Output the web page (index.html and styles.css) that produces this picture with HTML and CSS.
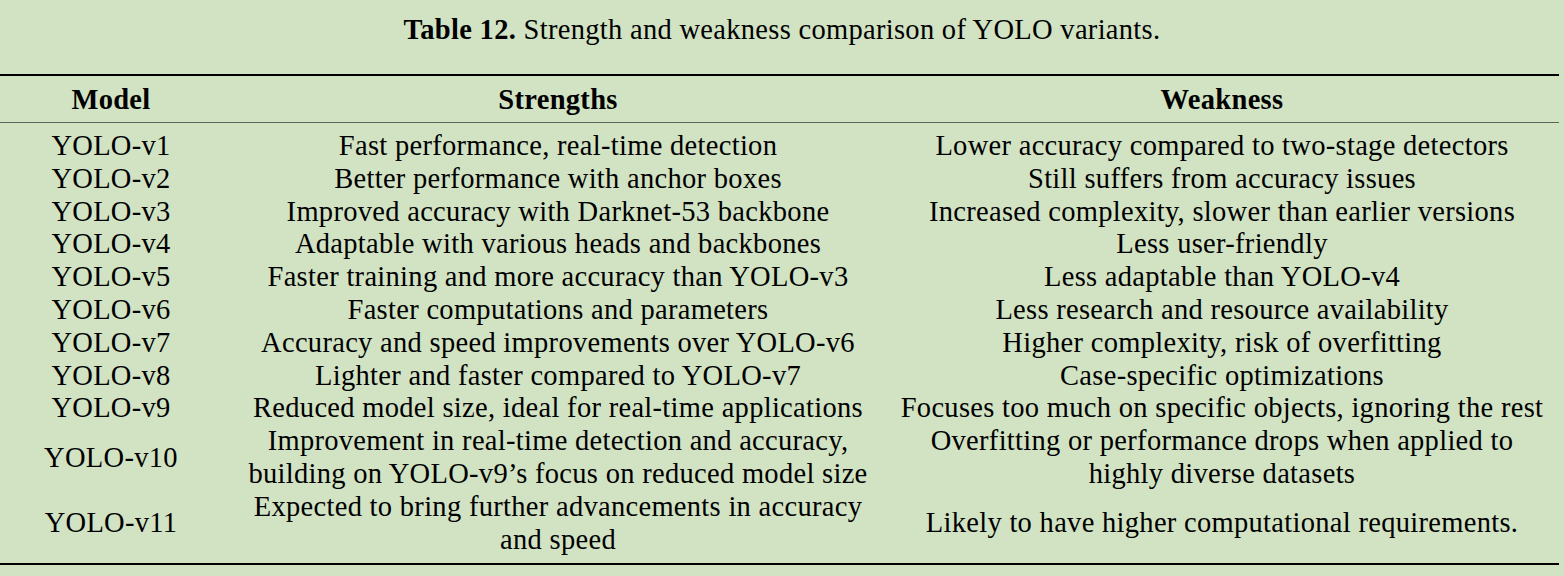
FILE: index.html
```html
<!DOCTYPE html>
<html lang="en">
<head>
<meta charset="utf-8">
<title>Table 12</title>
<link rel="stylesheet" href="styles.css">
</head>
<body>
<div class="page">
  <p class="caption"><b>Table 12.</b> Strength and weakness comparison of YOLO variants.</p>
  <div class="rules">
    <table class="cmp">
      <colgroup>
        <col class="c-model">
        <col class="c-str">
        <col class="c-weak">
      </colgroup>
      <thead>
        <tr><th>Model</th><th>Strengths</th><th>Weakness</th></tr>
      </thead>
      <tbody>
        <tr><td>YOLO-v1</td><td>Fast performance, real-time detection</td><td>Lower accuracy compared to two-stage detectors</td></tr>
        <tr><td>YOLO-v2</td><td>Better performance with anchor boxes</td><td>Still suffers from accuracy issues</td></tr>
        <tr><td>YOLO-v3</td><td>Improved accuracy with Darknet-53 backbone</td><td>Increased complexity, slower than earlier versions</td></tr>
        <tr><td>YOLO-v4</td><td>Adaptable with various heads and backbones</td><td>Less user-friendly</td></tr>
        <tr><td>YOLO-v5</td><td>Faster training and more accuracy than YOLO-v3</td><td>Less adaptable than YOLO-v4</td></tr>
        <tr><td>YOLO-v6</td><td>Faster computations and parameters</td><td>Less research and resource availability</td></tr>
        <tr><td>YOLO-v7</td><td>Accuracy and speed improvements over YOLO-v6</td><td>Higher complexity, risk of overfitting</td></tr>
        <tr><td>YOLO-v8</td><td>Lighter and faster compared to YOLO-v7</td><td>Case-specific optimizations</td></tr>
        <tr><td>YOLO-v9</td><td>Reduced model size, ideal for real-time applications</td><td>Focuses too much on specific objects, ignoring the rest</td></tr>
        <tr><td>YOLO-v10</td><td>Improvement in real-time detection and accuracy,<br>building on YOLO-v9’s focus on reduced model size</td><td>Overfitting or performance drops when applied to<br>highly diverse datasets</td></tr>
        <tr><td>YOLO-v11</td><td>Expected to bring further advancements in accuracy<br>and speed</td><td>Likely to have higher computational requirements.</td></tr>
      </tbody>
    </table>
  </div>
</div>
</body>
</html>
```

FILE: styles.css
```css
html, body {
  margin: 0;
  padding: 0;
  background: #d2e3c4;
}

.page {
  width: 1564px;
  height: 576px;
  background: #d2e3c4;
  color: #000;
  font-family: "Liberation Serif", "Times New Roman", serif;
  font-size: 28.5px;
  letter-spacing: 0.3px;
}

.caption {
  margin: 0;
  padding-top: 13px;
  height: 74px;
  line-height: 33px;
  text-align: center;
  box-sizing: border-box;
}

.rules {
  width: 1559px;
  border-top: 2.4px solid #000;
  border-bottom: 2.6px solid #000;
}

.cmp {
  width: 1559px;
  table-layout: fixed;
  border-spacing: 0;
}

.c-model { width: 222px; }
.c-str { width: 672px; }
.c-weak { width: 665px; }

.cmp th {
  height: 46px;
  padding: 0;
  font-weight: bold;
  text-align: center;
  vertical-align: middle;
  border-bottom: 1.6px solid #5d6459;
  line-height: 33px;
}

.cmp td {
  padding: 0;
  text-align: center;
  vertical-align: middle;
  line-height: 32.8px;
  white-space: nowrap;
}

.cmp th:last-child,
.cmp td:last-child {
  padding-right: 9px;
}

.cmp tbody tr:first-child td {
  padding-top: 7px;
}

.cmp tbody tr:last-child td {
  padding-bottom: 6.5px;
}
```
